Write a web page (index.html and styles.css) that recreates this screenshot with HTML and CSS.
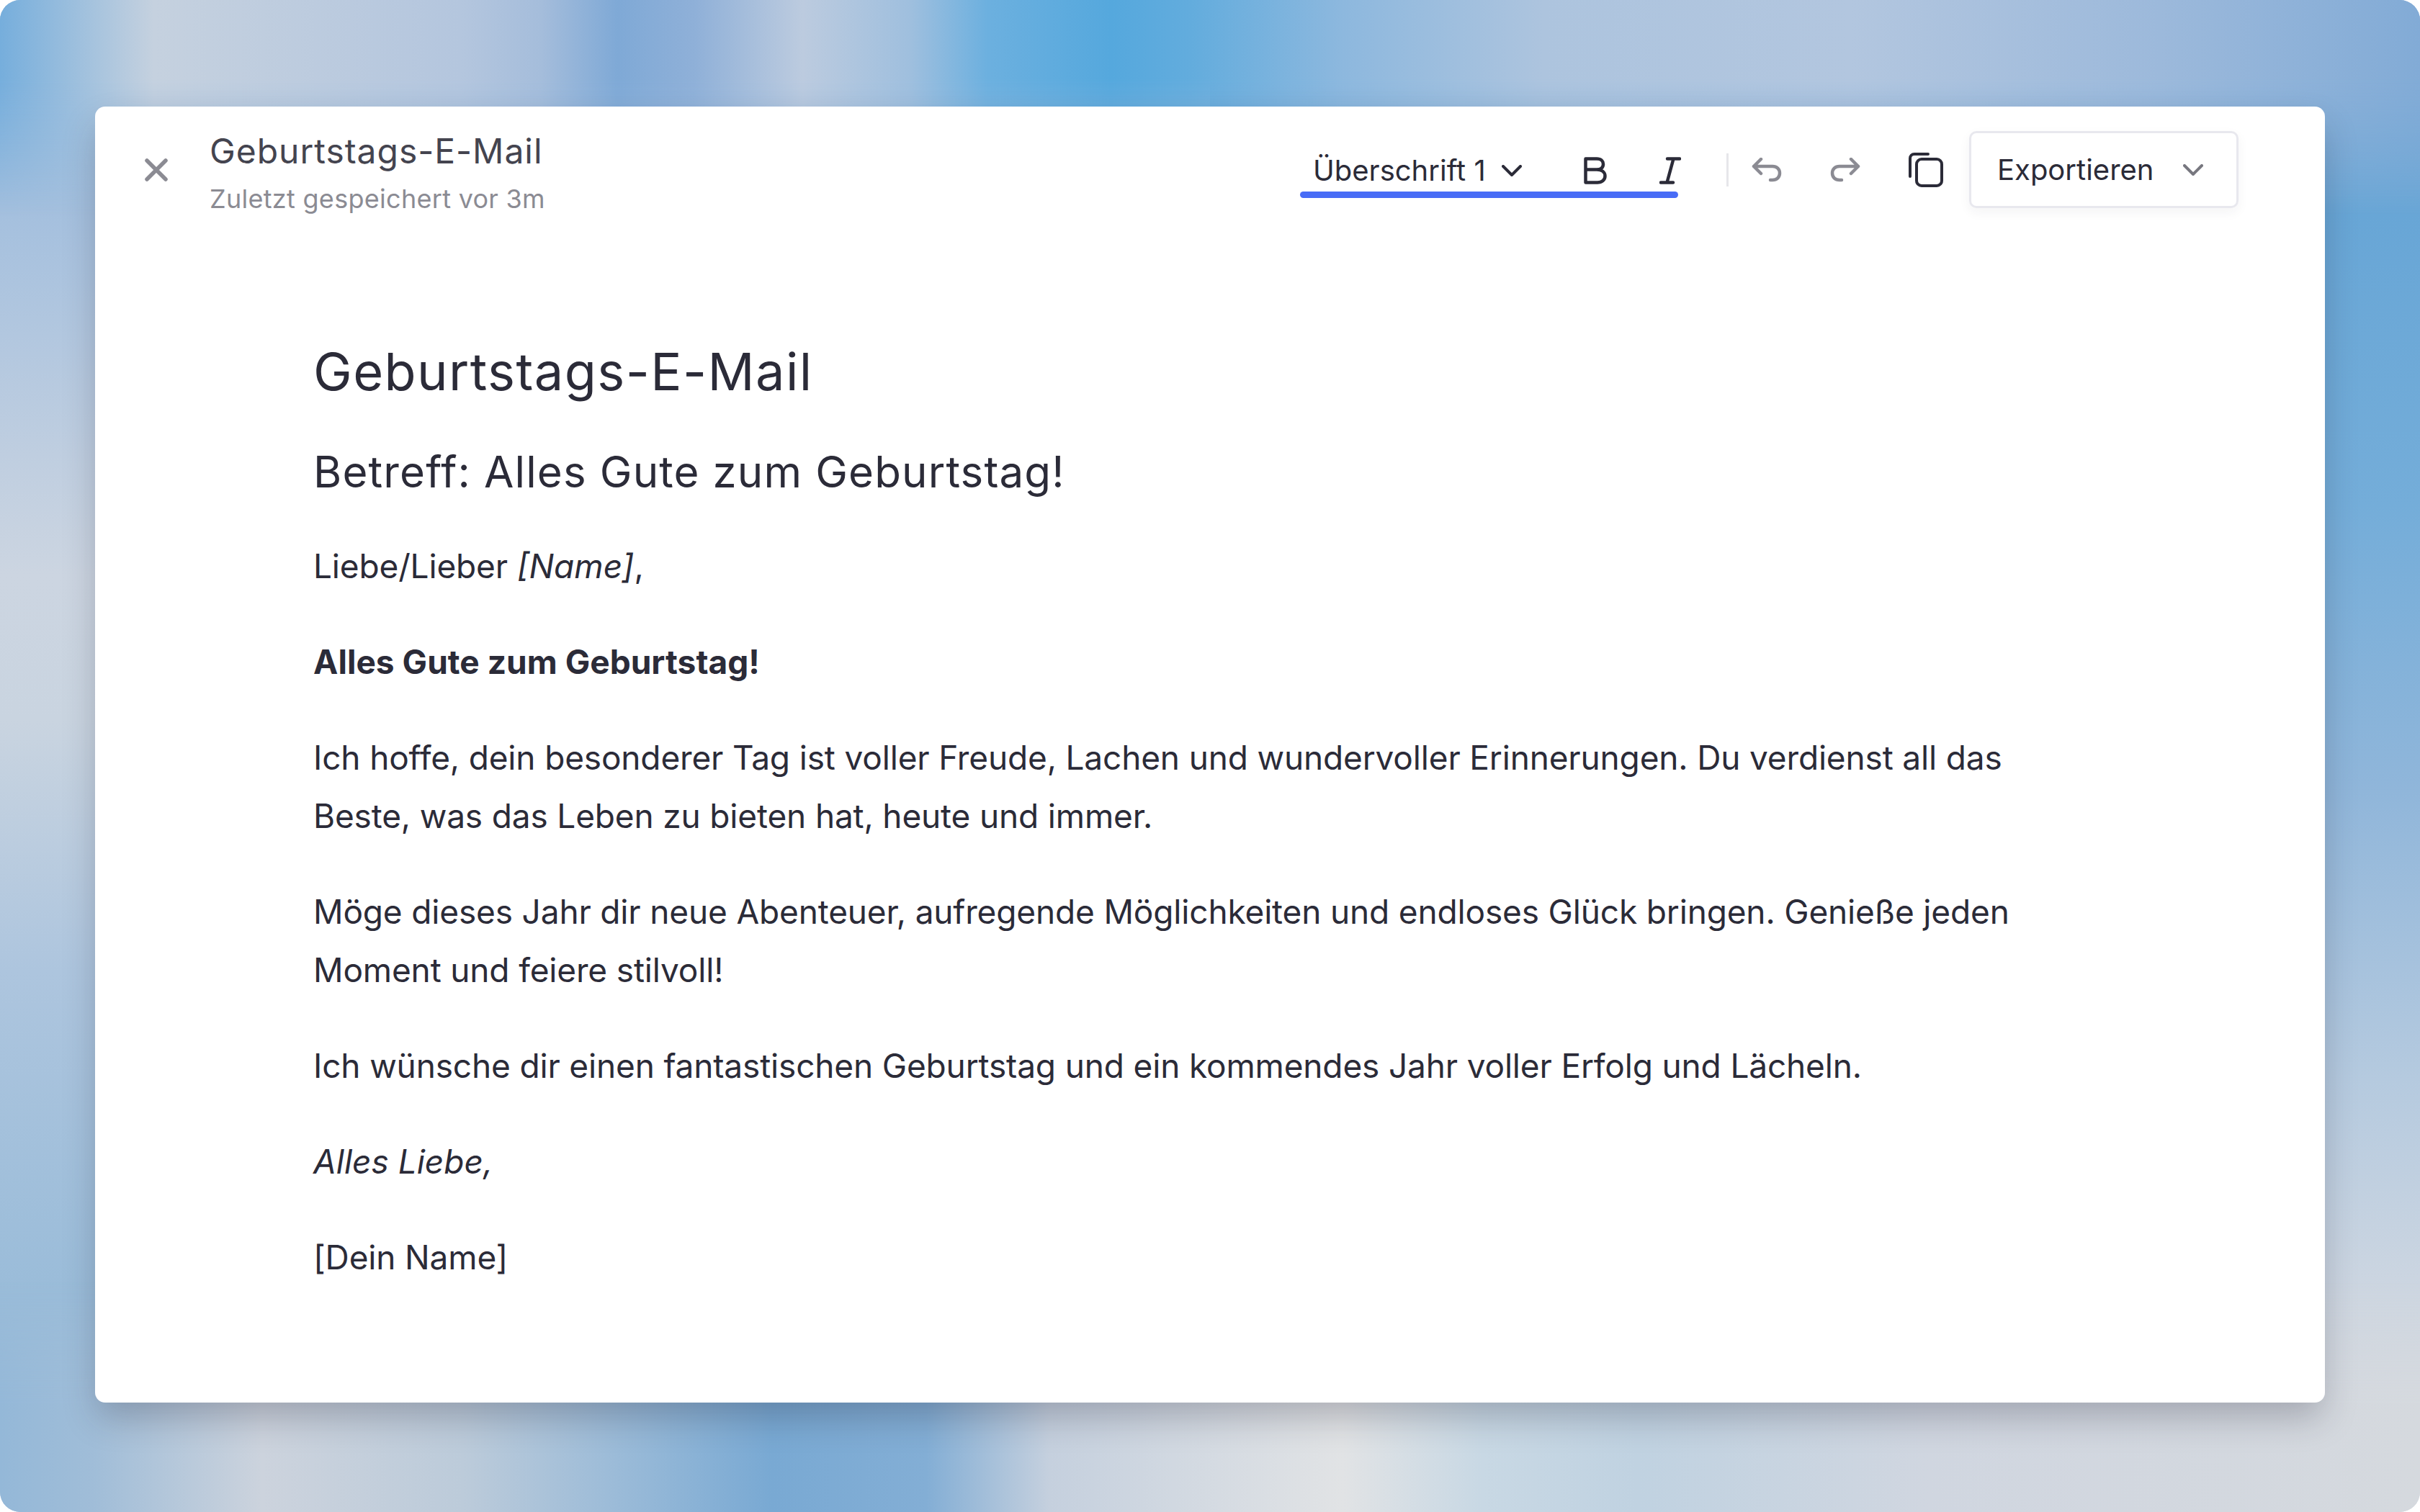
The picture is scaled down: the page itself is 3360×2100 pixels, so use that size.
FILE: index.html
```html
<!DOCTYPE html>
<html lang="de">
<head>
    <meta charset="UTF-8">
    <title>Geburtstags-E-Mail</title>
    <link rel="stylesheet" href="styles.css">
</head>
<body>
    <div class="backdrop">
        <div class="editor">
            <header class="topbar">
                <button class="close-btn">
                    <svg class="icon-close" viewBox="0 0 32 32"><path d="M3 3 L29 29 M29 3 L3 29"/></svg>
                </button>
                <div class="doc-info">
                    <div class="doc-name">Geburtstags-E-Mail</div>
                    <div class="doc-saved">Zuletzt gespeichert vor 3m</div>
                </div>
                <div class="toolbar">
                    <div class="format-group">
                        <div class="format-row">
                            <span class="style-label">Überschrift 1</span>
                            <svg class="icon-chevron" viewBox="0 0 28 16"><path d="M2 2 L14 14 L26 2"/></svg>
                            <svg class="icon-bold" viewBox="0 0 32 38"><path d="M2.500 2.500 H18 C24 2.500 27 6 27 10 C27 14.500 24 17.500 18 17.500 H2.500 Z M18 17.500 C25 17.500 29.500 21 29.500 26.500 C29.500 32 25 35.500 19 35.500 H2.500 V2.500"/></svg>
                            <svg class="icon-italic" viewBox="0 0 30 38"><path d="M11 2.500 H28 M2 35.500 H19 M19.500 2.500 L10.500 35.500"/></svg>
                        </div>
                        <div class="format-bar"></div>
                    </div>
                    <div class="divider"></div>
                    <svg class="icon-history" viewBox="0 0 42 34"><path d="M13 2 L3 12 L13 22 M3 12 H29 C35 12 39 16 39 21.500 C39 27 35 31 29 31 H26"/></svg>
                    <svg class="icon-history redo" viewBox="0 0 42 34"><path d="M29 2 L39 12 L29 22 M39 12 H13 C7 12 3 16 3 21.500 C3 27 7 31 13 31 H16"/></svg>
                    <svg class="icon-copy" viewBox="0 0 48 48"><path d="M27 2 H8 C4.500 2 2 4.500 2 8 V33"/><rect x="11" y="9" width="35" height="37" rx="7"/></svg>
                    <button class="export-btn">
                        <span>Exportieren</span>
                        <svg class="icon-chevron grey" viewBox="0 0 28 16"><path d="M2 2 L14 14 L26 2"/></svg>
                    </button>
                </div>
            </header>
            <main class="document">
                <h1>Geburtstags-E-Mail</h1>
                <h2>Betreff: Alles Gute zum Geburtstag!</h2>
                <p>Liebe/Lieber <em>[Name]</em>,</p>
                <p><strong>Alles Gute zum Geburtstag!</strong></p>
                <p>Ich hoffe, dein besonderer Tag ist voller Freude, Lachen und wundervoller Erinnerungen. Du verdienst all das Beste, was das Leben zu bieten hat, heute und immer.</p>
                <p>Möge dieses Jahr dir neue Abenteuer, aufregende Möglichkeiten und endloses Glück bringen. Genieße jeden Moment und feiere stilvoll!</p>
                <p>Ich wünsche dir einen fantastischen Geburtstag und ein kommendes Jahr voller Erfolg und Lächeln.</p>
                <p><em>Alles Liebe,</em></p>
                <p>[Dein Name]</p>
            </main>
        </div>
    </div>
</body>
</html>
```

FILE: styles.css
```css
html, body {
    margin: 0;
    background-color: white;
}
body {
    font-family: Inter, "Noto Sans", sans-serif;
    color: #2b2b38;
}
.backdrop {
    position: relative;
    overflow: hidden;
    box-sizing: border-box;
    width: 3360px;
    height: 2100px;
    padding: 148px 132px 152px 132px;
    border-radius: 28px;
    background-image:
        linear-gradient(180deg, #8ab5dc 0, #a5c0de 300px, #ccd5e1 800px, #c9d4e0 1000px, #adc5de 1350px, #9abcd9 1800px, #9fbed9 2100px),
        linear-gradient(180deg, #85aed8 0, #68a6d6 300px, #74add9 700px, #90b6da 1100px, #b5cadf 1500px, #cdd6e1 1800px, #d5d9de 2100px);
    background-size: 50% 100%;
    background-position: left top, right top;
    background-repeat: no-repeat;
}
/* colour bands above and below the window, faded into the side gradients */
.backdrop::before,
.backdrop::after {
    content: "";
    position: absolute;
    left: 0;
    right: 0;
}
.backdrop::before {
    top: 0;
    height: 300px;
    background: linear-gradient(90deg, #76aedc 0, #c5d1df 214px, #b4c6de 640px, #a5bddb 750px, #7fa9d6 857px, #8fb0d8 964px, #bccbdf 1114px, #9fbfde 1264px, #6cb0df 1371px, #55a8dd 1543px, #62acdd 1650px, #8db8de 1864px, #adc4de 2143px, #b2c6df 2571px, #9cb9db 3000px, #82abd6 3360px);
    -webkit-mask-image: linear-gradient(180deg, black 110px, transparent 300px);
    mask-image: linear-gradient(180deg, black 110px, transparent 300px);
}
.backdrop::after {
    bottom: 0;
    height: 320px;
    background: linear-gradient(90deg, #94b8d8 0, #a0bdd8 130px, #ccd3dd 364px, #bccbda 643px, #9bbbd8 857px, #79a9d3 1071px, #83aed5 1286px, #c5d0de 1457px, #e1e3e5 1864px, #c8d8e4 2057px, #c0d2e1 2271px, #d0d6e0 2678px, #d5d9de 3360px);
    -webkit-mask-image: linear-gradient(0deg, black 150px, transparent 320px);
    mask-image: linear-gradient(0deg, black 150px, transparent 320px);
}
.editor {
    position: relative;
    z-index: 1;
    height: 100%;
    background-color: white;
    border-radius: 14px;
    box-shadow: 0 24px 48px -4px rgba(30, 30, 50, 0.26);
}
.topbar {
    display: flex;
    align-items: center;
    height: 175px;
    padding: 0 120px 0 69px;
}
button {
    font-family: inherit;
    background: none;
    border: none;
    padding: 0;
}
.close-btn {
    display: flex;
    margin-right: 58px;
}
svg {
    fill: none;
    stroke-linecap: round;
    stroke-linejoin: round;
    flex-shrink: 0;
}
.icon-close {
    width: 32px;
    height: 32px;
    stroke: #8b8b93;
    stroke-width: 5.500;
}
.doc-info {
    margin-top: 8px;
}
.doc-name {
    font-size: 48px;
    line-height: 62px;
    letter-spacing: 0.02em;
    color: #44444f;
}
.doc-saved {
    font-size: 36px;
    line-height: 50px;
    letter-spacing: 0.008em;
    margin-top: 10px;
    color: #8b8b93;
}
.toolbar {
    display: flex;
    align-items: center;
    margin-left: auto;
}
.format-group {
    display: flex;
    flex-direction: column;
    width: 525px;
    margin-top: 12px;
}
.format-row {
    display: flex;
    align-items: center;
    height: 56px;
    padding-left: 18px;
}
.style-label {
    font-size: 40px;
    line-height: 56px;
    white-space: nowrap;
}
.icon-chevron {
    width: 28px;
    height: 16px;
    margin-left: 22px;
    stroke: #2b2b38;
    stroke-width: 4;
}
.icon-chevron.grey {
    stroke: #77777f;
}
.icon-bold {
    width: 32px;
    height: 38px;
    margin-left: 86px;
    stroke: #2b2b38;
    stroke-width: 4.500;
}
.icon-italic {
    width: 30px;
    height: 38px;
    margin-left: 73px;
    stroke: #2b2b38;
    stroke-width: 4.500;
}
.format-bar {
    height: 9px;
    margin-top: 1px;
    border-radius: 5px;
    background-color: #486cf6;
}
.divider {
    width: 3px;
    height: 46px;
    margin: 0 32px 0 67px;
    background-color: #e6e6ea;
}
.icon-history {
    width: 42px;
    height: 34px;
    stroke: #8b8b93;
    stroke-width: 4.500;
}
.icon-history.redo {
    margin-left: 67px;
}
.icon-copy {
    width: 48px;
    height: 48px;
    margin-left: 67px;
    stroke: #2b2b38;
    stroke-width: 4;
}
.export-btn {
    display: flex;
    align-items: center;
    box-sizing: border-box;
    width: 374px;
    height: 107px;
    margin-left: 36px;
    padding: 0 46px 0 36px;
    justify-content: space-between;
    font-size: 40px;
    color: #2b2b38;
    border: 3px solid #e8e8ee;
    border-radius: 10px;
    box-shadow: 0 6px 16px rgba(30, 30, 60, 0.05);
}
.export-btn .icon-chevron {
    margin-left: 0;
}
.document {
    padding: 0 378px 0 303px;
}
h1 {
    margin: 0;
    padding-top: 151px;
    font-size: 72px;
    line-height: 84px;
    font-weight: 400;
    letter-spacing: 0.02em;
}
h2 {
    margin: 55px 0 0;
    font-size: 60px;
    line-height: 84px;
    font-weight: 400;
    letter-spacing: 0.019em;
}
p {
    margin: 52px 0 0;
    font-size: 46px;
    line-height: 81px;
    letter-spacing: -0.16px;
}
h2 + p {
    margin-top: 49px;
}
em {
    letter-spacing: 0;
}
strong {
    font-weight: 700;
    letter-spacing: 0.04px;
}
```
